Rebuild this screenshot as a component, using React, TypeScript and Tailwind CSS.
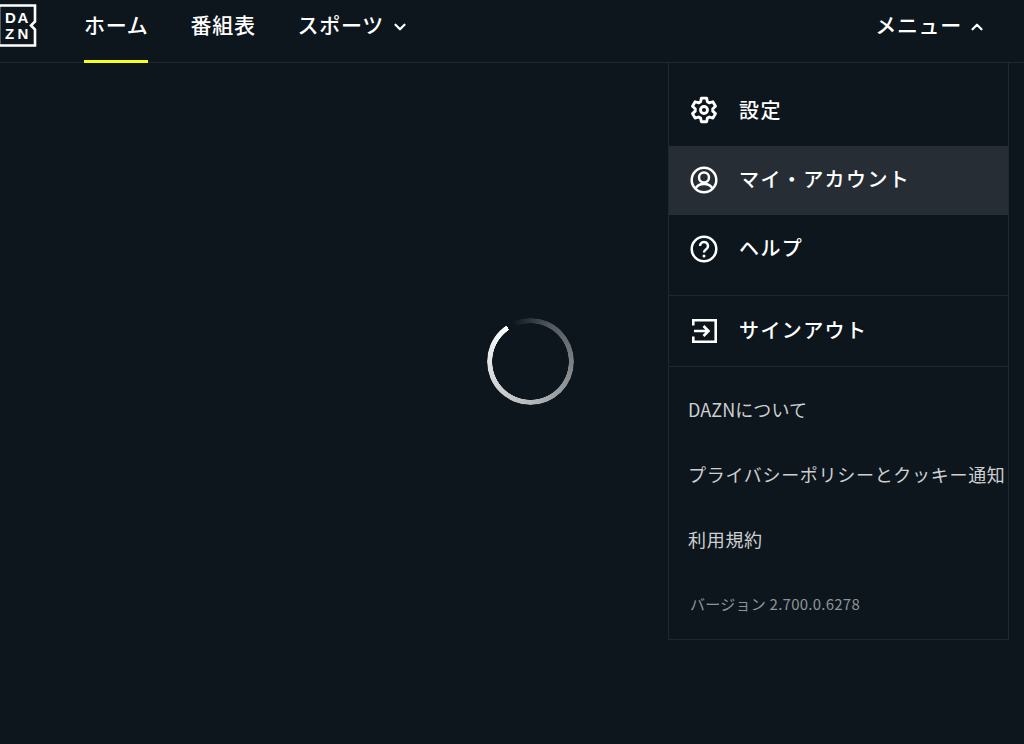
import { ChevronDown, ChevronUp } from 'lucide-react'

const FONT = "font-['Noto_Sans_CJK_JP','Noto_Sans',sans-serif]"

function Logo() {
  return (
    <div className="relative w-[39px] h-[43px] -ml-[2px] shrink-0">
      <svg viewBox="0 0 39 43" className="w-[39px] h-[43px]" fill="none">
        <path d="M1 1.5H37V17.5L33 21.5L37 25.5V41.5H1Z" stroke="#fff" strokeWidth="2.6" />
      </svg>
      <div className="absolute left-[7px] top-[6px] w-[27px] grid grid-cols-[12.5px_14.5px] text-white text-[15px] leading-[16px] font-bold font-['Liberation_Sans',sans-serif]">
        <span>D</span>
        <span>A</span>
        <span>Z</span>
        <span>N</span>
      </div>
    </div>
  )
}

function NavItem({ label, active, chevron }: { label: string; active?: boolean; chevron?: boolean }) {
  return (
    <div className="relative h-full flex items-center gap-[7px] text-white text-[21px] tracking-[0.7px] font-medium">
      <span className="-mt-[12px]">{label}</span>
      {chevron && <ChevronDown className="w-[18px] h-[18px] -mt-[9px]" strokeWidth={3} />}
      {active && <span className="absolute left-0 right-0 bottom-[-1px] h-[3px] bg-[#f7ff1a]" />}
    </div>
  )
}

function GearIcon() {
  return (
    <svg viewBox="0 0 24 24" className="w-[30px] h-[30px] -mt-[3px]" fill="none" stroke="#fff" strokeWidth="2.3" strokeLinejoin="round">
      <path d="M9.9 2.5h4.2l.6 2.9 1.6.9 2.8-.9 2.1 3.6-2.2 2v1.9l2.2 2-2.1 3.6-2.8-.9-1.6.9-.6 2.9H9.9l-.6-2.9-1.6-.9-2.8.9-2.1-3.6 2.2-2V11l-2.2-2 2.1-3.6 2.8.9 1.6-.9z" />
      <circle cx="12" cy="12" r="2.8" />
    </svg>
  )
}

function UserIcon() {
  return (
    <svg viewBox="0 0 28 28" className="w-[28px] h-[28px] -mt-[1px]" fill="none" stroke="#fff" strokeWidth="2.5">
      <circle cx="14" cy="14" r="12.3" />
      <circle cx="14" cy="11.5" r="5" />
      <path d="M5.5 22.5c1.5-3 4.5-4.5 8.5-4.5s7 1.5 8.5 4.5" />
    </svg>
  )
}

function HelpIcon() {
  return (
    <svg viewBox="0 0 28 28" className="w-[28px] h-[28px] -mt-[1px]" fill="none" stroke="#fff" strokeWidth="2.5">
      <circle cx="14" cy="14" r="12.3" />
      <path d="M10 11a4 4 0 1 1 6.2 3.3c-1.4.9-2.2 1.6-2.2 3.2" />
      <circle cx="14" cy="21" r="1.5" fill="#fff" stroke="none" />
    </svg>
  )
}

function SignOutIcon() {
  return (
    <svg viewBox="0 0 25 24" className="w-[25px] h-[24px]" fill="none" stroke="#fff" strokeWidth="2.6">
      <path d="M1.3 6.5V1.3H23.7V22.7H1.3V17.5" />
      <path d="M2 12H16M11.5 7l5 5-5 5" />
    </svg>
  )
}

function MenuRow({ icon, label, active, tall }: { icon: React.ReactNode; label: string; active?: boolean; tall?: boolean }) {
  return (
    <div className={`flex items-center pl-[20px] ${tall ? 'h-[70px]' : 'h-[69px]'} ${active ? 'bg-[#262d34]' : ''}`}>
      <div className="w-[30px] flex justify-center">{icon}</div>
      <span className="ml-[20px] -mt-[3px] text-white text-[20px] tracking-[1.4px] font-medium">{label}</span>
    </div>
  )
}

function FootLink({ label, tight }: { label: string; tight?: boolean }) {
  return (
    <div className={`h-[65px] flex items-center pl-[19px] text-[#cdcfd1] text-[18px] whitespace-nowrap ${tight ? 'tracking-[0.1px]' : 'tracking-[0.7px]'}`}>
      {label}
    </div>
  )
}

export default function App() {
  return (
    <div className={`relative w-[1024px] h-[744px] overflow-hidden bg-[#0d161d] ${FONT}`}>
      <header className="h-[63px] border-b border-[#20282f] flex items-start justify-between pr-[38px]">
        <div className="h-full flex items-center gap-[42px]">
          <div className="flex items-center h-full gap-[47px]">
            <div className="-mt-[11px]">
              <Logo />
            </div>
            <NavItem label="ホーム" active />
          </div>
          <NavItem label="番組表" />
          <NavItem label="スポーツ" chevron />
        </div>
        <div className="h-full flex items-center">
          <NavItem label="メニュー" />
          <ChevronUp className="ml-[6px] -mt-[9px] w-[18px] h-[18px] text-white" strokeWidth={3} />
        </div>
      </header>

      <main className="pl-[487px] pt-[255px]">
        <div className="w-[87px] h-[87px] rounded-full bg-[conic-gradient(from_-34deg,transparent_0deg,transparent_8deg,rgba(255,255,255,0.28)_60deg,rgba(255,255,255,0.7)_214deg,#fff_360deg)] [mask:radial-gradient(farthest-side,transparent_calc(100%-5.5px),#000_calc(100%-5px))]" />
      </main>

      <nav className="absolute left-[668px] top-[63px] w-[341px] h-[577px] border-x border-b border-[#20282f] bg-[#0d161d]">
        <div className="pt-[14px]">
          <MenuRow icon={<GearIcon />} label="設定" />
          <MenuRow icon={<UserIcon />} label="マイ・アカウント" active />
          <MenuRow icon={<HelpIcon />} label="ヘルプ" />
        </div>
        <div className="mt-[11px] border-y border-[#20282f]">
          <MenuRow icon={<SignOutIcon />} label="サインアウト" tall />
        </div>
        <div className="mt-[10px]">
          <FootLink label="DAZNについて" tight />
          <FootLink label="プライバシーポリシーとクッキー通知" />
          <FootLink label="利用規約" />
          <div className="h-[65px] flex items-center pl-[21px] text-[#8f9397] text-[15px] tracking-[0.25px]">バージョン 2.700.0.6278</div>
        </div>
      </nav>
    </div>
  )
}
